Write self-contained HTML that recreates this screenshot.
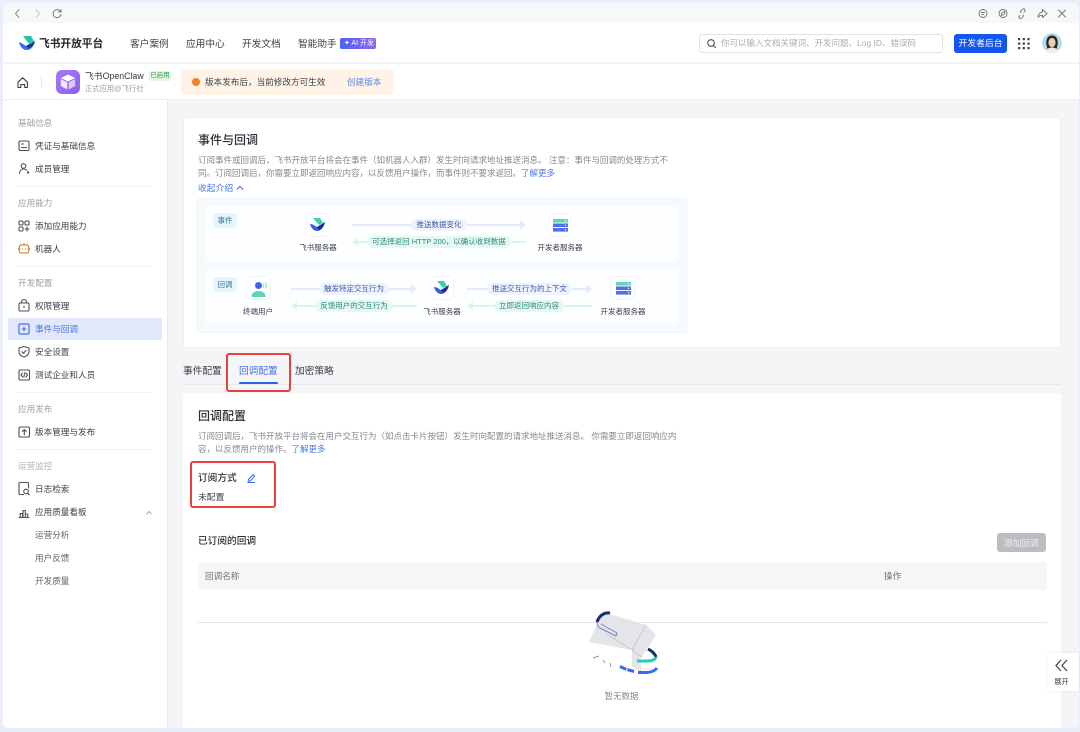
<!DOCTYPE html>
<html lang="zh"><head><meta charset="utf-8"><title>事件与回调</title>
<style>
*{box-sizing:border-box;margin:0;padding:0}
html,body{width:1080px;height:732px;overflow:hidden;background:#e9eefb}
body{font-family:"Liberation Sans","Noto Sans CJK SC",sans-serif;color:#1f2329;position:relative}
#r{position:absolute;left:0;top:0;width:1080px;height:732px;filter:blur(.3px);background:#e9eefb}
.b{position:absolute}
.t{position:absolute;white-space:nowrap;line-height:14px;height:14px;font-size:8.6px;color:#3c4047}
.c{transform:translateX(-50%)}
.s{color:#9a9ea5}
.d{position:absolute;left:18px;width:134px;height:1px;background:#eff0f2}
.g{color:#85898f;font-size:8.5px}
.l{color:#4a78ee}
svg{position:absolute;overflow:visible}
.i{fill:none;stroke:#4d5157;stroke-width:1.1;stroke-linecap:round;stroke-linejoin:round}
.k{fill:none;stroke:#6f7278;stroke-width:.9;stroke-linecap:round;stroke-linejoin:round}
.box{position:absolute;width:24px;height:24px;background:#fff;border:1px solid #edf2fd;border-radius:6px}
.p{position:absolute;height:12px;border-radius:6px;font-size:7.5px;line-height:12px;text-align:center;white-space:nowrap}
.p1{background:#eef3fe;color:#3f5aa8}.p2{background:#e6f8f4;color:#2c8a74}
.cap{font-size:7.5px;color:#3c4047}
.tab{font-size:9.7px}
.red{position:absolute;border:2px solid #e8403c;border-radius:3px}
</style></head><body>
<div id="r">
<div class="b" style="left:3px;top:3px;width:1076px;height:725px;border-radius:6px;overflow:hidden;background:#f4f5f7">
<div class="b" style="left:0;top:0;width:1076px;height:20px;background:#f7f8fa"></div>
<div class="b" style="left:0;top:20px;width:1076px;height:39px;background:#fff"></div>
<div class="b" style="left:0;top:59px;width:1076px;height:2px;background:#f3f4f6"></div>
<div class="b" style="left:0;top:61px;width:1076px;height:36px;background:#fff;border-bottom:1px solid #eceef0"></div>
<div class="b" style="left:0;top:97px;width:165px;height:628px;background:#fff;border-right:1px solid #e8e9eb"></div>
<div class="b" style="left:180px;top:114px;width:878px;height:231px;background:#fff;border-radius:4px;border:1px solid #eef0f2"></div>
<div class="b" style="left:180px;top:390px;width:878px;height:335px;background:#fff;border-radius:4px 4px 0 0"></div>
</div>

<!-- toolbar -->
<svg style="left:0;top:0" width="1080" height="30" viewBox="0 0 1080 30">
<path class="k" d="M19 9.500l-3.500 4 3.500 4"/>
<path class="k" style="stroke:#b8bbc0" d="M36 9.500l3.500 4-3.500 4"/>
<path class="k" d="M60.500 11.500a4 4 0 1 0 .5 3M61 9.500v2.500h-2.500"/>
<circle class="k" cx="983" cy="13.500" r="4"/><path class="k" d="M981.500 12.500h3M982 14.500h1.500"/>
<circle class="k" cx="1003" cy="13.500" r="4"/><path class="k" d="M1005 11.500l-3 1-1 3 3-1z"/>
<path class="k" d="M1020 15.500l-.8.800a1.500 1.500 0 0 0 2.200 2l1.500-1.500a1.500 1.500 0 0 0 0-2M1024 12l.8-.8a1.500 1.500 0 0 0-2.200-2l-1.500 1.500a1.500 1.500 0 0 0 0 2"/>
<path class="k" d="M1042.500 9.500l4.500 4-4.500 4v-2.200c-2 0-3.300.5-4.500 2 .3-3 1.800-5 4.500-5.300z"/>
<path class="k" d="M1058.500 10l7 7M1065.500 10l-7 7"/>
</svg>

<!-- header -->
<svg style="left:19px;top:36px" width="17" height="15" viewBox="0 0 17 15">
<path d="M4 0h8l3 5-5 3z" fill="#21c8a6"/><path d="M0 6c3 1 5 3 7 4l4-2 5-3c-1 5-4 9-8 9-4 0-7-3-8-8z" fill="#2f6ef3"/><path d="M7 10l9-5c-1 4-3 6-6 7z" fill="#11308f"/>
</svg>
<div class="t" style="left:39px;top:37px;font-size:10.700px;font-weight:700;color:#1f2329">飞书开放平台</div>
<div class="t tab" style="left:130px;top:37.500px">客户案例</div>
<div class="t tab" style="left:186px;top:37.500px">应用中心</div>
<div class="t tab" style="left:242px;top:37.500px">开发文档</div>
<div class="t tab" style="left:298px;top:37.500px">智能助手</div>
<div class="b" style="left:340px;top:37.500px;width:36px;height:11.500px;border-radius:2px;background:linear-gradient(90deg,#4d62f5,#8f66f0)"></div>
<div class="t" style="left:344px;top:36.500px;font-size:7px;color:#fff">✦ AI 开发</div>
<div class="b" style="left:699px;top:34px;width:244px;height:19px;border:1px solid #dfe1e5;border-radius:3px;background:#fff"></div>
<svg style="left:707px;top:39px" width="10" height="10" viewBox="0 0 10 10"><circle class="i" cx="4" cy="4" r="3.300"/><path class="i" d="M6.500 6.500l2 2"/></svg>
<div class="t s" style="left:721px;top:36px;font-size:8.500px;color:#a9adb3">你可以输入文档关键词、开发问题、Log ID、错误码</div>
<div class="b" style="left:954px;top:34px;width:53px;height:19px;border-radius:3px;background:#1456f0"></div>
<div class="t c" style="left:980.500px;top:36px;font-size:8.800px;color:#fff">开发者后台</div>
<svg style="left:1018px;top:38px" width="12" height="12" viewBox="0 0 12 12" fill="#3d4045">
<rect x="0" y="0" width="2.200" height="2.200"/><rect x="4.700" y="0" width="2.200" height="2.200"/><rect x="9.400" y="0" width="2.200" height="2.200"/>
<rect x="0" y="4.500" width="2.200" height="2.200"/><rect x="4.700" y="4.500" width="2.200" height="2.200"/><rect x="9.400" y="4.500" width="2.200" height="2.200"/>
<rect x="0" y="9" width="2.200" height="2.200"/><rect x="4.700" y="9" width="2.200" height="2.200"/><rect x="9.400" y="9" width="2.200" height="2.200"/>
</svg>
<svg style="left:1042px;top:33px" width="20" height="20" viewBox="0 0 20 20">
<circle cx="10" cy="10" r="9.800" fill="#a5e0ee"/><path d="M4.500 12c-1-6 1.500-9.500 5.500-9.500s6.500 3.500 5.500 9.500l-1 4H5.500z" fill="#2a2422"/>
<ellipse cx="10" cy="9.500" rx="3.600" ry="4.600" fill="#eccbb6"/><path d="M3.500 18c2-3 4.500-3.500 6.500-3.500s4.500.5 6.500 3.500a9.800 9.800 0 0 1-13 0z" fill="#f2ece6"/>
</svg>

<!-- app bar -->
<svg style="left:17px;top:76.500px" width="12" height="12" viewBox="0 0 12 12"><path d="M1 5.200L5.700.8l4.700 4.400v5.300H7.700V7.500H3.800v3H1z" fill="none" stroke="#3d4045" stroke-width="1.100" stroke-linejoin="round"/></svg>
<div class="b" style="left:41px;top:76px;width:1px;height:11px;background:#e6e7ea"></div>
<div class="b" style="left:56px;top:70px;width:24px;height:24px;border-radius:6px;background:linear-gradient(135deg,#a57af5,#8e5df0)"></div>
<svg style="left:60px;top:74px" width="16" height="16" viewBox="0 0 16 16"><path d="M8 .5l7 3.500L8 7.500 1 4z" fill="#fff"/><path d="M.8 5l6.500 3.400V15.500L.8 12z" fill="#f0e6ff"/><path d="M15.200 5L8.700 8.400V15.500l6.500-3.500z" fill="#dcc8fb"/></svg>
<div class="t" style="left:85px;top:68.500px;font-size:8.800px;color:#33373d">飞书OpenClaw</div>
<div class="b" style="left:149px;top:70.500px;width:22px;height:10px;border-radius:2px;background:#e4f5e4"></div>
<div class="t c" style="left:160px;top:68.500px;font-size:6.500px;color:#3c9a4e">已启用</div>
<div class="t s" style="left:85px;top:81.500px;font-size:7.300px">正式应用@飞行社</div>
<div class="b" style="left:181px;top:69px;width:213px;height:26px;border-radius:3px;background:#fff3e8"></div>
<div class="b" style="left:191.500px;top:77.500px;width:8.500px;height:8.500px;border-radius:50%;background:#f5811f"></div>
<div class="t" style="left:205px;top:75px;font-size:8.600px">版本发布后，当前修改方可生效</div>
<div class="t" style="left:347px;top:75px;font-size:8.600px;color:#5c87ee">创建版本</div>

<!-- sidebar -->
<div class="t s" style="left:18px;top:116px">基础信息</div>
<div class="t" style="left:35px;top:139px">凭证与基础信息</div>
<div class="t" style="left:35px;top:162px">成员管理</div>
<div class="d" style="top:186px"></div>
<div class="t s" style="left:18px;top:196px">应用能力</div>
<div class="t" style="left:35px;top:219px">添加应用能力</div>
<div class="t" style="left:35px;top:242px">机器人</div>
<div class="d" style="top:266px"></div>
<div class="t s" style="left:18px;top:276px">开发配置</div>
<div class="t" style="left:35px;top:299px">权限管理</div>
<div class="b" style="left:8px;top:318px;width:154px;height:22px;border-radius:2px;background:#e2e8fb"></div>
<div class="t" style="left:35px;top:322px;color:#4a72e8">事件与回调</div>
<div class="t" style="left:35px;top:345px">安全设置</div>
<div class="t" style="left:35px;top:368px">测试企业和人员</div>
<div class="d" style="top:392px"></div>
<div class="t s" style="left:18px;top:402px">应用发布</div>
<div class="t" style="left:35px;top:425px">版本管理与发布</div>
<div class="d" style="top:449px"></div>
<div class="t s" style="left:18px;top:459px;color:#b0b3b8">运营监控</div>
<div class="t" style="left:35px;top:482px">日志检索</div>
<div class="t" style="left:35px;top:505px">应用质量看板</div>
<div class="t" style="left:35px;top:528px;color:#5f6368">运营分析</div>
<div class="t" style="left:35px;top:551px;color:#5f6368">用户反馈</div>
<div class="t" style="left:35px;top:574px;color:#5f6368">开发质量</div>
<svg style="left:0;top:0" width="170" height="600" viewBox="0 0 170 600">
<rect class="i" x="19" y="141" width="10" height="9.500" rx="1.300"/><path class="i" d="M21.500 144h2M21.500 147.500h5"/>
<circle class="i" cx="23.500" cy="166" r="2.300"/><path class="i" d="M19.500 173.500c.3-3 2-4.500 4-4.500 1.200 0 2.200.4 3 1.200"/><circle cx="28" cy="172.500" r="1.200" fill="#4d5157"/>
<rect class="i" x="19" y="221" width="4" height="4" rx="1"/><rect class="i" x="25" y="221" width="4" height="4" rx="1"/><rect class="i" x="19" y="227" width="4" height="4" rx="1"/><path class="i" d="M27 227v4M25 229h4"/>
<rect x="19.500" y="245" width="9" height="8" rx="1.500" fill="none" stroke="#d58a3c" stroke-width="1.200"/><path d="M24 245v-2M18.500 248v2M29.500 248v2" stroke="#d58a3c" stroke-width="1" fill="none"/><circle cx="22.300" cy="249" r=".7" fill="#d58a3c"/><circle cx="25.700" cy="249" r=".7" fill="#d58a3c"/>
<rect class="i" x="19" y="303" width="10" height="8" rx="1.300"/><path class="i" d="M21.500 303v-1a2.500 2.500 0 0 1 5 0v1"/><circle cx="24" cy="307" r=".9" fill="#4d5157"/>
<rect x="19" y="324" width="10" height="10" rx="1.300" fill="none" stroke="#4a72e8" stroke-width="1.200"/><path d="M24 326.800v4.400M21.800 329h4.400" stroke="#4a72e8" stroke-width="1.100"/>
<path class="i" d="M24 346.500l5 1.500v3.500c0 3-2.500 4.800-5 5.500-2.500-.7-5-2.500-5-5.500V348z"/><path class="i" d="M22 351.800l1.500 1.500 2.500-2.800"/>
<rect class="i" x="19" y="370" width="10.500" height="10" rx="1.300"/><path class="i" d="M22.500 373l-1.500 2 1.500 2M26 373l1.500 2-1.500 2M24.800 372.800l-1 4.500"/>
<rect class="i" x="19" y="427" width="10.500" height="10" rx="1.300"/><path class="i" d="M24.300 434.800v-5M22.300 431.500l2-2 2 2"/>
<path class="i" d="M28.500 488v-4.500a1 1 0 0 0-1-1h-7.500a1 1 0 0 0-1 1v10a1 1 0 0 0 1 1h3.500"/><circle class="i" cx="26" cy="491.500" r="2.300"/><path class="i" d="M27.800 493.300l1.500 1.500"/>
<path class="i" d="M19 517.500h10M20.300 517.500v-4h2.200v4M23 517.500v-7h2.300v7M25.300 517.500v-3.500h2.400v3.500"/>
<path d="M146.500 514l2.500-2.500 2.500 2.500" fill="none" stroke="#a7aaaf" stroke-width="1"/>
</svg>

<!-- card 1 -->
<div class="t" style="left:198px;top:133px;font-size:12px;font-weight:500;color:#2b2f36">事件与回调</div>
<div class="t g" style="left:198px;top:153px">订阅事件或回调后，飞书开放平台将会在事件（如机器人入群）发生时向请求地址推送消息。 注意：事件与回调的处理方式不</div>
<div class="t g" style="left:198px;top:166px">同。订阅回调后，你需要立即返回响应内容，以反馈用户操作，而事件则不要求返回。<span class="l">了解更多</span></div>
<div class="t l" style="left:198px;top:181px;font-size:8.800px">收起介绍</div>
<svg style="left:236px;top:185px" width="8" height="6" viewBox="0 0 8 6"><path d="M.8 4.500L4 1.300l3.200 3.200" fill="none" stroke="#4a78ee" stroke-width="1.200"/></svg>

<!-- diagram -->
<div class="b" style="left:197px;top:198px;width:490px;height:135px;background:#f5fafd;border:1px solid #eef4fa;border-radius:3px"></div>
<div class="b" style="left:205px;top:206px;width:474px;height:56px;background:#fff;opacity:.8;border-radius:5px"></div>
<div class="b" style="left:205px;top:269px;width:474px;height:56px;background:#fff;opacity:.8;border-radius:5px"></div>
<div class="p" style="left:213px;top:213px;width:24px;height:15px;line-height:15px;background:#e6f5fb;color:#2b7d98;border-radius:4px">事件</div>
<div class="p" style="left:213px;top:277px;width:24px;height:15px;line-height:15px;background:#e6f5fb;color:#2b7d98;border-radius:4px">回调</div>

<svg style="left:0;top:0" width="700" height="340" viewBox="0 0 700 340">
<path d="M352 225h168" stroke="#e3eafd" stroke-width="2.200"/><path d="M520 220.500l6 4.500-6 4.500z" fill="#e3eafd"/>
<path d="M358 242h168" stroke="#d7f6ee" stroke-width="2"/><path d="M358 237.500l-6 4.500 6 4.500z" fill="#d7f6ee"/>
<path d="M291 289h120" stroke="#e3eafd" stroke-width="2.200"/><path d="M411 284.500l6 4.500-6 4.500z" fill="#e3eafd"/>
<path d="M297 306h120" stroke="#d7f6ee" stroke-width="2"/><path d="M297 301.500l-6 4.500 6 4.500z" fill="#d7f6ee"/>
<path d="M467 289h119" stroke="#e3eafd" stroke-width="2.200"/><path d="M586 284.500l6 4.500-6 4.500z" fill="#e3eafd"/>
<path d="M473 306h119" stroke="#d7f6ee" stroke-width="2"/><path d="M473 301.500l-6 4.500 6 4.500z" fill="#d7f6ee"/>
</svg>

<div class="p p1" style="left:411px;top:219px;width:56px">推送数据变化</div>
<div class="p p2" style="left:367px;top:236px;width:144px">可选择返回 HTTP 200，以确认收到数据</div>
<div class="p p1" style="left:319px;top:283px;width:70px">触发特定交互行为</div>
<div class="p p2" style="left:315px;top:300px;width:78px">反馈用户的交互行为</div>
<div class="p p1" style="left:487px;top:283px;width:85px">推送交互行为的上下文</div>
<div class="p p2" style="left:494px;top:300px;width:70px">立即返回响应内容</div>

<div class="box" style="left:306px;top:213px"></div>
<div class="box" style="left:430px;top:276px"></div>
<div class="box" style="left:548px;top:213px"></div>
<div class="box" style="left:611px;top:276px"></div>
<div class="box" style="left:246px;top:276px;width:25px"></div>
<svg style="left:310px;top:218px" width="16" height="14" viewBox="0 0 16 14"><path d="M3 0h7l3 5-4 2z" fill="#3ecfae"/><path d="M0 6c3 0 5 2 7 3l3-1 5-4c-1 5-4 9-8 9-3 0-6-3-7-7z" fill="#3460e6"/><path d="M7 9l8-5c-1 4-3 7-6 8z" fill="#182f8c"/></svg>
<svg style="left:434px;top:281px" width="16" height="14" viewBox="0 0 16 14"><path d="M3 0h7l3 5-4 2z" fill="#3ecfae"/><path d="M0 6c3 0 5 2 7 3l3-1 5-4c-1 5-4 9-8 9-3 0-6-3-7-7z" fill="#3460e6"/><path d="M7 9l8-5c-1 4-3 7-6 8z" fill="#182f8c"/></svg>
<svg style="left:553px;top:219px" width="15" height="13" viewBox="0 0 15 13"><rect width="15" height="3.600" fill="#5fd6b6"/><rect y="4.500" width="15" height="3.600" fill="#4f6ff0"/><rect y="9" width="15" height="3.600" fill="#4f6ff0"/><circle cx="12.500" cy="1.800" r=".7" fill="#fff"/><circle cx="12.500" cy="6.300" r=".7" fill="#fff"/><circle cx="12.500" cy="10.800" r=".7" fill="#fff"/></svg>
<svg style="left:616px;top:282px" width="15" height="13" viewBox="0 0 15 13"><rect width="15" height="3.600" fill="#5fd6b6"/><rect y="4.500" width="15" height="3.600" fill="#4f6ff0"/><rect y="9" width="15" height="3.600" fill="#4f6ff0"/><circle cx="12.500" cy="1.800" r=".7" fill="#fff"/><circle cx="12.500" cy="6.300" r=".7" fill="#fff"/><circle cx="12.500" cy="10.800" r=".7" fill="#fff"/></svg>
<svg style="left:250px;top:280px" width="18" height="18" viewBox="0 0 18 18"><circle cx="8.500" cy="5.500" r="3.500" fill="#3a66ee"/><path d="M1.500 17c0-4 2.500-6 7-6s7 2 7 6z" fill="#5fd6b6"/><path d="M13.500 3.500c.6 1.200.6 2.800 0 4M15.500 2.500c1 1.800 1 4.200 0 6" fill="none" stroke="#5fd6b6" stroke-width=".8"/></svg>

<div class="t c cap" style="left:318px;top:241px">飞书服务器</div>
<div class="t c cap" style="left:560px;top:241px">开发者服务器</div>
<div class="t c cap" style="left:258px;top:304.500px">终端用户</div>
<div class="t c cap" style="left:442px;top:304.500px">飞书服务器</div>
<div class="t c cap" style="left:623px;top:304.500px">开发者服务器</div>

<!-- tabs -->
<div class="t tab" style="left:183px;top:364.500px">事件配置</div>
<div class="t tab" style="left:239px;top:364.500px;color:#4a72e8">回调配置</div>
<div class="t tab" style="left:295px;top:364.500px">加密策略</div>
<div class="b" style="left:183px;top:384px;width:878px;height:1px;background:#e4e6e9"></div>
<div class="b" style="left:239px;top:382px;width:39px;height:2px;background:#2a5ff0;border-radius:1px"></div>
<div class="red" style="left:226px;top:353px;width:65px;height:39px"></div>

<!-- card 2 -->
<div class="t" style="left:198px;top:409px;font-size:12px;font-weight:500;color:#2b2f36">回调配置</div>
<div class="t g" style="left:198px;top:429px">订阅回调后，飞书开放平台将会在用户交互行为（如点击卡片按钮）发生时向配置的请求地址推送消息。 你需要立即返回响应内</div>
<div class="t g" style="left:198px;top:442px">容，以反馈用户的操作。<span class="l">了解更多</span></div>
<div class="red" style="left:190px;top:461px;width:86px;height:47px"></div>
<div class="t" style="left:198px;top:472px;font-size:9.700px;font-weight:500;color:#2b2f36">订阅方式</div>
<svg style="left:247px;top:473px" width="9" height="10" viewBox="0 0 9 10"><path d="M1.500 6.500L6 1.500l1.700 1.500-4.500 5-2 .3zM.5 9.500h7.500" fill="none" stroke="#3c6df0" stroke-width="1"/></svg>
<div class="t" style="left:198px;top:490px;font-size:8.800px">未配置</div>
<div class="t" style="left:198px;top:534.500px;font-size:9.700px;font-weight:500;color:#2b2f36">已订阅的回调</div>
<div class="b" style="left:997px;top:533px;width:49px;height:19px;background:#babdc2;border-radius:3px"></div>
<div class="t c" style="left:1021.500px;top:536px;color:#eceef0">添加回调</div>
<div class="b" style="left:198px;top:562px;width:849px;height:28px;background:#f5f6f7"></div>
<div class="t" style="left:205px;top:569px;color:#6d7177">回调名称</div>
<div class="t" style="left:884px;top:569px;color:#6d7177">操作</div>
<div class="b" style="left:198px;top:622px;width:849px;height:1px;background:#e6e7e9"></div>

<!-- empty illustration -->
<svg style="left:560px;top:600px" width="130" height="110" viewBox="0 0 130 110">
<path d="M29 42L43 12 86 25 96 35 83 55 80 59 82 74 72 66 72 50z" fill="#e3e5e9"/>
<path d="M45 33L72 50M86 25L72 50 82 57" stroke="#b9bcc3" stroke-width=".7" fill="none"/>
<path d="M37 22c0 3 1 5 3 6l16 8 1-3-16-9" fill="none" stroke="#7587b8" stroke-width="1"/>
<path d="M50 13c-6-1-11 3-13 9" fill="none" stroke="#16306f" stroke-width="3"/>
<path d="M88 49c4 2 7 5 8 8" fill="none" stroke="#16306f" stroke-width="3"/>
<path d="M77 61h10c4 0 8-1 9-4" fill="none" stroke="#24d0ad" stroke-width="3"/>
<path d="M60 66.500c4 2 9 4 15 5" fill="none" stroke="#3a6af0" stroke-width="3" stroke-dasharray="7 1"/>
<path d="M78 72.500h8c5 0 9-2 11-4.500" fill="none" stroke="#3a6af0" stroke-width="3"/>
<path d="M33 58l6-2M43 60l2 3M50 63l1 4" stroke="#8b97b5" stroke-width="1"/>
</svg>
<div class="t c" style="left:621.500px;top:689px;font-size:8.500px;color:#85898f">暂无数据</div>

<!-- expand -->
<div class="b" style="left:1048px;top:653px;width:31px;height:38px;background:#fff;border-radius:3px 0 0 3px;box-shadow:0 0 3px rgba(0,0,0,.08)"></div>
<svg style="left:1055px;top:659px" width="14" height="13" viewBox="0 0 14 13"><path d="M6 1L1 6.500 6 12M12 1L7 6.500 12 12" fill="none" stroke="#3d4045" stroke-width="1.200"/></svg>
<div class="t c" style="left:1061.500px;top:674.500px;font-size:7.200px">展开</div>
</div>
</body></html>
